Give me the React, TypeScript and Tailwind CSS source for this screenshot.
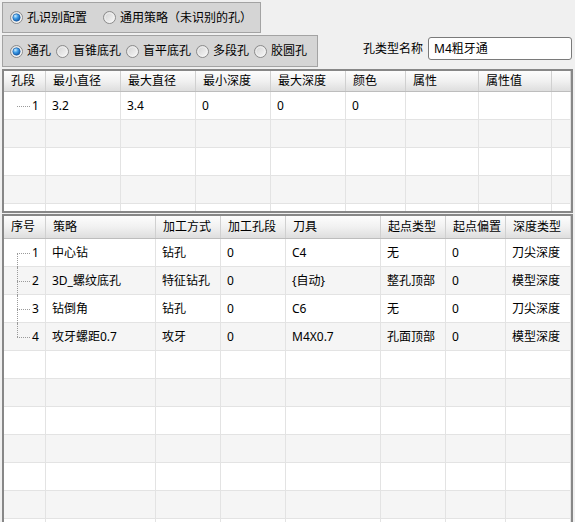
import React from "react";

function Radio({ checked }: { checked?: boolean }) {
  return (
    <svg width="13" height="13" viewBox="0 0 13 13" className="shrink-0">
      <defs>
        <linearGradient id="rbg" x1="0" y1="0" x2="1" y2="1">
          <stop offset="0" stopColor="#cfcfcf" />
          <stop offset="1" stopColor="#fbfbfb" />
        </linearGradient>
        <radialGradient id="rdot" cx="0.35" cy="0.3" r="0.8">
          <stop offset="0" stopColor="#c8ecff" />
          <stop offset="0.45" stopColor="#3c9ae6" />
          <stop offset="1" stopColor="#0b4f9e" />
        </radialGradient>
      </defs>
      <circle cx="6.5" cy="6.5" r="6" fill="url(#rbg)" stroke="#8a8a8a" strokeWidth="1" />
      <circle cx="6.5" cy="6.5" r="4.6" fill="none" stroke="#f4f4f4" strokeWidth="0.8" />
      {checked && <circle cx="6.5" cy="6.5" r="3.7" fill="url(#rdot)" stroke="#1a5aa3" strokeWidth="0.6" />}
    </svg>
  );
}

function RadioItem({ label, checked, className = "" }: { label: string; checked?: boolean; className?: string }) {
  return (
    <div className={"flex items-center gap-[4px] " + className}>
      <Radio checked={checked} />
      <span className="whitespace-nowrap">{label}</span>
    </div>
  );
}

type Col = { w?: number; label: string };

function TreeCell({ num, pos }: { num: string; pos: "single" | "first" | "mid" | "last" }) {
  return (
    <div className="relative h-full w-full">
      <div className="absolute left-[13px] top-1/2 w-[13px] border-t border-dotted border-[#9a9a9a]" />
      {pos === "first" && <div className="absolute left-[13px] top-1/2 bottom-[-1px] border-l border-dotted border-[#9a9a9a]" />}
      {pos === "mid" && <div className="absolute left-[13px] top-0 bottom-[-1px] border-l border-dotted border-[#9a9a9a]" />}
      {pos === "last" && <div className="absolute left-[13px] top-0 h-1/2 border-l border-dotted border-[#9a9a9a]" />}
      <div className="flex h-full items-center pl-[28px]">{num}</div>
    </div>
  );
}

function Grid({
  cols,
  rows,
  rowCount,
  headerH,
  bodyH,
}: {
  cols: Col[];
  rows: string[][];
  rowCount: number;
  headerH: string;
  bodyH: string;
}) {
  const n = rows.length;
  return (
    <div className="mx-[2px] border-2 border-[#878787] bg-white">
      <div className={"flex border-b border-[#bdbdbd] bg-linear-to-b from-[#fdfdfd] via-[#f1f1f1] to-[#dedede] " + headerH}>
        {cols.map((c, i) => (
          <div
            key={i}
            className={
              "flex items-center border-r border-[#d0d0d0] pl-[7px] whitespace-nowrap " + (c.w ? "shrink-0" : "flex-1")
            }
            style={c.w ? { width: c.w } : undefined}
          >
            {c.label}
          </div>
        ))}
      </div>
      <div className={"overflow-hidden " + bodyH}>
        {Array.from({ length: rowCount }).map((_, r) => {
          const data = rows[r];
          return (
            <div key={r} className={"flex h-[28px] " + (r % 2 === 0 ? "bg-white" : "bg-[#f5f5f5]")}>
              {cols.map((c, i) => (
                <div
                  key={i}
                  className={
                    "flex h-full items-center border-r border-b border-[#e3e3e3] whitespace-nowrap " +
                    (c.w ? "shrink-0 " : "flex-1 ") +
                    (i === 0 ? "" : "pl-[6px]")
                  }
                  style={c.w ? { width: c.w } : undefined}
                >
                  {data && i === 0 ? (
                    <TreeCell
                      num={data[0]}
                      pos={n === 1 ? "single" : r === 0 ? "first" : r === n - 1 ? "last" : "mid"}
                    />
                  ) : data ? (
                    data[i]
                  ) : null}
                </div>
              ))}
            </div>
          );
        })}
      </div>
    </div>
  );
}

export default function App() {
  const cols1: Col[] = [
    { w: 42, label: "孔段" },
    { w: 75, label: "最小直径" },
    { w: 75, label: "最大直径" },
    { w: 75, label: "最小深度" },
    { w: 75, label: "最大深度" },
    { w: 60, label: "颜色" },
    { w: 73, label: "属性" },
    { w: 73, label: "属性值" },
    { label: "" },
  ];
  const rows1 = [["1", "3.2", "3.4", "0", "0", "0", "", "", ""]];

  const cols2: Col[] = [
    { w: 42, label: "序号" },
    { w: 110, label: "策略" },
    { w: 65, label: "加工方式" },
    { w: 65, label: "加工孔段" },
    { w: 95, label: "刀具" },
    { w: 65, label: "起点类型" },
    { w: 60, label: "起点偏置" },
    { label: "深度类型" },
  ];
  const rows2 = [
    ["1", "中心钻", "钻孔", "0", "C4", "无", "0", "刀尖深度"],
    ["2", "3D_螺纹底孔", "特征钻孔", "0", "{自动}", "整孔顶部", "0", "模型深度"],
    ["3", "钻倒角", "钻孔", "0", "C6", "无", "0", "刀尖深度"],
    ["4", "攻牙螺距0.7", "攻牙", "0", "M4X0.7", "孔面顶部", "0", "模型深度"],
  ];

  return (
    <div className="h-[522px] w-[575px] overflow-hidden bg-[#f0f0f0] text-[12px] leading-[16px] text-black font-['Noto_Sans','Noto_Sans_CJK_SC',sans-serif]">
      <div className="pt-[2px] pl-[2px]">
        <div className="flex h-[31px] w-[259px] items-center gap-[12px] border border-[#a3a3a3] bg-[#d5d5d5] pl-[7px]">
          <RadioItem label="孔识别配置" checked />
          <RadioItem label="通用策略（未识别的孔）" className="ml-[4px]" />
        </div>
      </div>
      <div className="mt-[2px] flex items-start pl-[2px]">
        <div className="flex h-[32px] w-[316px] items-center gap-[5px] border border-[#a3a3a3] bg-[#d5d5d5] pl-[7px]">
          <RadioItem label="通孔" checked />
          <RadioItem label="盲锥底孔" />
          <RadioItem label="盲平底孔" />
          <RadioItem label="多段孔" />
          <RadioItem label="胶圆孔" />
        </div>
        <div className="ml-auto mr-[3px] mt-[2px] flex items-center gap-[5px]">
          <span className="whitespace-nowrap">孔类型名称</span>
          <div className="flex h-[23px] w-[144px] items-center rounded-[3px] border border-[#7a7a7a] bg-white pl-[5px]">
            M4粗牙通
          </div>
        </div>
      </div>
      <div className="mt-[2px]">
        <Grid cols={cols1} rows={rows1} rowCount={5} headerH="h-[21px]" bodyH="h-[119px]" />
      </div>
      <div className="mt-[1px]">
        <Grid cols={cols2} rows={rows2} rowCount={11} headerH="h-[23px]" bodyH="h-[300px]" />
      </div>
    </div>
  );
}
